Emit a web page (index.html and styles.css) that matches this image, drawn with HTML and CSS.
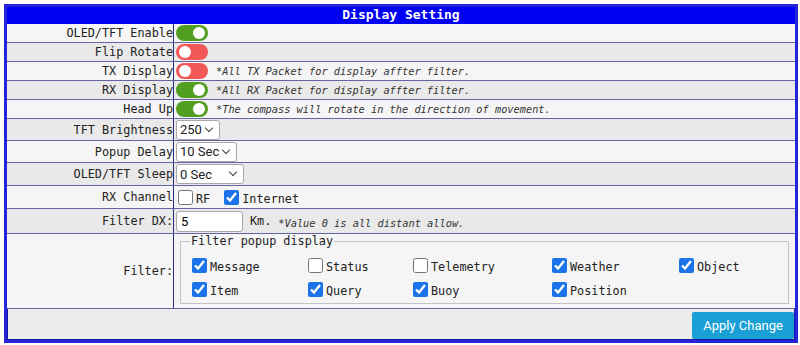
FILE: index.html
```html
<!DOCTYPE html>
<html>
<head>
<meta charset="utf-8">
<link rel="stylesheet" href="styles.css">
</head>
<body>
<div class="panel">
  <div class="title">Display Setting</div>
  <div class="row row-a h-toggle">
    <div class="label">OLED/TFT Enable</div>
    <div class="value"><span class="switch on"></span></div>
  </div>
  <div class="row row-b h-toggle">
    <div class="label">Flip Rotate</div>
    <div class="value"><span class="switch off"></span></div>
  </div>
  <div class="row row-a h-toggle">
    <div class="label">TX Display</div>
    <div class="value"><span class="switch off"></span><span class="note">*All TX Packet for display affter filter.</span></div>
  </div>
  <div class="row row-b h-toggle">
    <div class="label">RX Display</div>
    <div class="value"><span class="switch on"></span><span class="note">*All RX Packet for display affter filter.</span></div>
  </div>
  <div class="row row-a h-toggle">
    <div class="label">Head Up</div>
    <div class="value"><span class="switch on"></span><span class="note">*The compass will rotate in the direction of movement.</span></div>
  </div>
  <div class="row row-b h-select">
    <div class="label">TFT Brightness</div>
    <div class="value"><span class="selwrap"><select class="sel sel-s"><option>250</option></select></span></div>
  </div>
  <div class="row row-a h-select">
    <div class="label">Popup Delay</div>
    <div class="value"><span class="selwrap"><select class="sel sel-m"><option>10 Sec</option></select></span></div>
  </div>
  <div class="row row-b h-select2">
    <div class="label">OLED/TFT Sleep</div>
    <div class="value"><span class="selwrap"><select class="sel sel-l"><option>0 Sec</option></select></span></div>
  </div>
  <div class="row row-a h-select2">
    <div class="label">RX Channel</div>
    <div class="value">
      <label class="chk"><input type="checkbox"><span>RF</span></label>
      <label class="chk chk-gap"><input type="checkbox" checked><span>Internet</span></label>
    </div>
  </div>
  <div class="row row-b h-input">
    <div class="label">Filter DX:</div>
    <div class="value"><input class="txt" type="text" value="5"><span class="unit">Km.</span><span class="note">*Value 0 is all distant allow.</span></div>
  </div>
  <div class="row row-a h-filter">
    <div class="label">Filter:</div>
    <div class="value">
      <fieldset class="group">
        <legend>Filter popup display</legend>
        <div class="grid">
          <label class="chk"><input type="checkbox" checked><span>Message</span></label>
          <label class="chk"><input type="checkbox"><span>Status</span></label>
          <label class="chk"><input type="checkbox"><span>Telemetry</span></label>
          <label class="chk"><input type="checkbox" checked><span>Weather</span></label>
          <label class="chk"><input type="checkbox" checked><span>Object</span></label>
          <label class="chk"><input type="checkbox" checked><span>Item</span></label>
          <label class="chk"><input type="checkbox" checked><span>Query</span></label>
          <label class="chk"><input type="checkbox" checked><span>Buoy</span></label>
          <label class="chk"><input type="checkbox" checked><span>Position</span></label>
        </div>
      </fieldset>
    </div>
  </div>
  <div class="footer">
    <button class="apply">Apply Change</button>
  </div>
</div>
</body>
</html>
```
FILE: styles.css
```css
html, body {
  margin: 0;
  padding: 0;
  background: #ffffff;
}
body {
  padding: 4px 2px 0 4px;
  font-family: "DejaVu Sans Mono", monospace;
  color: #222;
}
.panel {
  border: 3px solid #2424d8;
  box-shadow: inset 0 0 0 1px #1a1aa0;
  background: #ececec;
}
.title {
  height: 17px;
  background: #0000f2;
  color: #fff;
  font-weight: bold;
  font-size: 13px;
  line-height: 16px;
  text-align: center;
}
.row {
  display: flex;
  border-bottom: 1px solid #6464a4;
  box-sizing: border-box;
}
.row-a { background: #f5f5f5; }
.row-b { background: #e9e9e9; }
.h-toggle { height: 19px; }
.h-select { height: 22px; }
.h-select2 { height: 23px; }
.h-input { height: 25px; }
.h-filter { height: 75px; }
.label {
  width: 166px;
  flex: none;
  border-right: 1px solid #2a2a80;
  display: flex;
  align-items: center;
  justify-content: flex-end;
  font-size: 11.8px;
  color: #222;
}
.value {
  flex: 1;
  display: flex;
  align-items: center;
  padding-left: 2px;
  min-width: 0;
}
.switch {
  position: relative;
  display: inline-block;
  width: 32px;
  height: 16px;
  border-radius: 8px;
  flex: none;
}
.switch::after {
  content: "";
  position: absolute;
  top: 2px;
  width: 12px;
  height: 12px;
  border-radius: 50%;
  background: #fff;
}
.switch.on { background: #519e20; }
.switch.on::after { right: 3px; }
.switch.off { background: #f25858; }
.switch.off::after { left: 3px; }
.note {
  font-style: italic;
  font-size: 10.3px;
  color: #333;
  margin-left: 8px;
  white-space: nowrap;
}
.selwrap {
  position: relative;
  display: inline-flex;
}
.selwrap::after {
  content: "";
  position: absolute;
  right: 8px;
  top: 5px;
  width: 5px;
  height: 5px;
  border-right: 1px solid #444;
  border-bottom: 1px solid #444;
  transform: rotate(45deg);
  pointer-events: none;
}
.sel {
  -webkit-appearance: none;
  appearance: none;
  height: 20px;
  font-family: Roboto, "Noto Sans", sans-serif;
  font-size: 13px;
  color: #222;
  background: #fff;
  border: 1px solid #a8a8a8;
  border-radius: 3px;
  padding: 0 0 0 3px;
  margin: 0;
}
.sel-s { width: 44px; }
.sel-m { width: 61px; }
.sel-l { width: 68px; }
.chk {
  display: inline-flex;
  align-items: center;
  font-size: 11.8px;
  color: #222;
}
.chk input {
  width: 15px;
  height: 15px;
  margin: 0 3px 0 2px;
  accent-color: #1a73e8;
}
.chk span { margin-top: 4px; }
.chk-gap { margin-left: 12px; }
.txt {
  width: 67px;
  height: 21px;
  box-sizing: border-box;
  border: 1px solid #a8a8a8;
  border-radius: 3px;
  background: #fff;
  font-family: Roboto, "Noto Sans", sans-serif;
  font-size: 13px;
  padding: 0 4px;
  margin: 0;
}
.unit {
  font-size: 11.8px;
  margin-left: 7px;
}
.value .unit + .note { margin-left: 7px; margin-top: 3px; }
.group {
  flex: 1;
  margin: 0 6px 4px 4px;
  padding: 8px 0 0 9px;
  border: 1px solid #c4c4c4;
  align-self: stretch;
  box-sizing: border-box;
}
.group legend {
  font-size: 11.8px;
  padding: 0 1px;
  margin-left: 0;
  color: #222;
}
.grid {
  display: grid;
  grid-template-columns: 116px 105px 139px 127px auto;
  row-gap: 6px;
}
.footer {
  height: 31px;
  display: flex;
  justify-content: flex-end;
  align-items: flex-start;
  padding-top: 3px;
  box-sizing: border-box;
}
.apply {
  width: 102px;
  height: 27px;
  background: #1a9fd6;
  color: #fff;
  border: none;
  border-radius: 2px;
  font-family: Roboto, "Noto Sans", sans-serif;
  font-size: 13px;
  margin-right: 1px;
}
```
